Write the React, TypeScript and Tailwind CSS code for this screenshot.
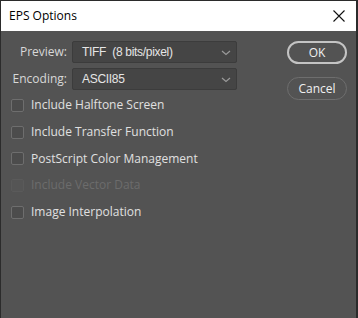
import React from 'react'

const Check = ({label, disabled}: {label: string, disabled?: boolean}) => {
    return (
        <div className="flex flex-row items-center h-[26.7px]">
            <div className={`w-[13px] h-[13px] rounded-[2px] border ${disabled ? 'border-[#5a5a5a] bg-[#555555]' : 'border-[#6e6e6e] bg-[#4c4c4c]'}`}></div>
            <span className={`ml-[7px] text-[12px] ${disabled ? 'text-[#6c6c6c]' : 'text-[#e0e0e0]'}`}>{label}</span>
        </div>
    )
}

const Select = ({value}: {value: string}) => {
    return (
        <div className="w-[165px] h-[22px] bg-[#454545] border border-[#3c3c3c] rounded-[2px] flex flex-row items-center pl-[9px] pr-[4px]">
            <span className="text-[12px] tracking-[-0.3px] text-[#e6e6e6] flex-1 whitespace-pre font-['Liberation_Sans',sans-serif]">{value}</span>
            <svg width="10" height="6" viewBox="0 0 10 6" className="mr-[1px] mt-[2px]">
                <path d="M1 1 L5 4.5 L9 1" stroke="#9a9a9a" strokeWidth="1.2" fill="none"/>
            </svg>
        </div>
    )
}

const App = () => {
    return (
        <div className="w-[358px] h-[318px] bg-[#2b2b2b] pt-px pl-px pr-[2px] flex flex-col" style={{fontFamily: '"Open Sans", "Noto Sans", sans-serif'}}>
            <div className="h-[30px] bg-white flex flex-row items-center pl-[8px] pr-[11px] shrink-0">
                <span className="text-[12px] text-black flex-1">EPS Options</span>
                <svg width="12" height="12" viewBox="0 0 12 12">
                    <path d="M0.5 0.5 L11.5 11.5 M11.5 0.5 L0.5 11.5" stroke="#111" strokeWidth="1.1"/>
                </svg>
            </div>
            <div className="flex-1 bg-[#535353] flex flex-row pt-[10px]">
                <div className="flex flex-col w-[284px]">
                    <div className="flex flex-row items-center gap-[5px] h-[22px]">
                        <span className="w-[66px] text-right text-[12px] text-[#d8d8d8]">Preview:</span>
                        <Select value="TIFF  (8 bits/pixel)"/>
                    </div>
                    <div className="flex flex-row items-center gap-[5px] h-[22px] mt-[5px]">
                        <span className="w-[66px] text-right text-[12px] text-[#d8d8d8]">Encoding:</span>
                        <Select value="ASCII85"/>
                    </div>
                    <div className="flex flex-col pl-[10px] mt-[2px]">
                        <Check label="Include Halftone Screen"/>
                        <Check label="Include Transfer Function"/>
                        <Check label="PostScript Color Management"/>
                        <Check label="Include Vector Data" disabled/>
                        <Check label="Image Interpolation"/>
                    </div>
                </div>
                <div className="flex flex-col gap-[13px] pl-[2px]">
                    <button className="w-[60px] h-[23px] rounded-full border-2 border-[#c4c4c4] text-[12px] text-[#f0f0f0] flex items-center justify-center">OK</button>
                    <button className="w-[60px] h-[23px] rounded-full border border-[#6e6e6e] text-[12px] text-[#f0f0f0] flex items-center justify-center">Cancel</button>
                </div>
            </div>
        </div>
    )
}
export default App
